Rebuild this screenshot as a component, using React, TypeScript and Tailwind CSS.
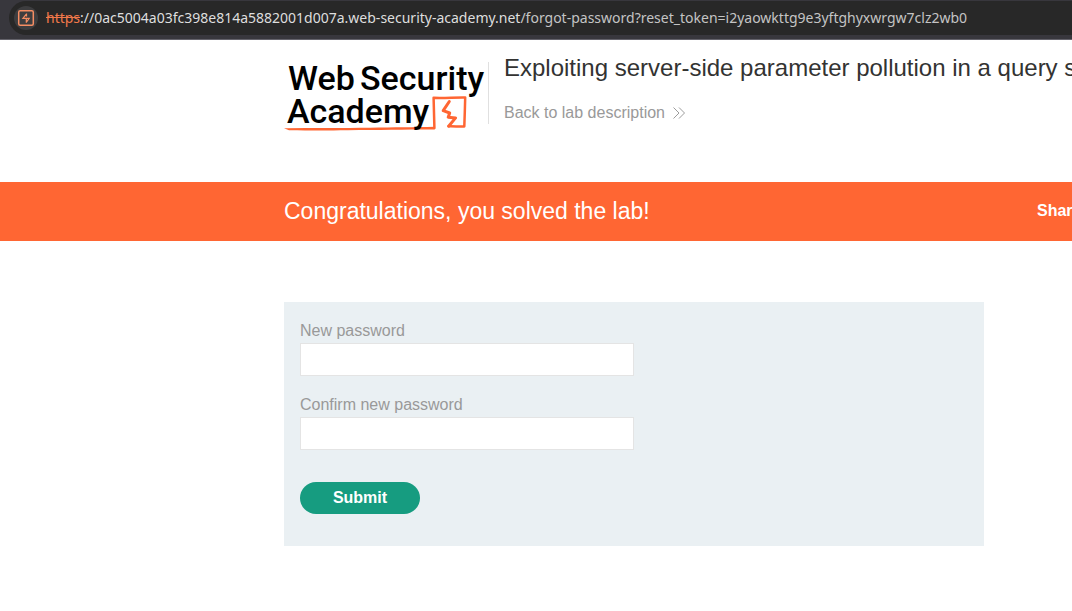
import React from "react";

function SiteIcon() {
  return (
    <svg viewBox="0 0 24 24" className="size-6 shrink-0" aria-hidden="true">
      <circle cx="12" cy="12" r="12" fill="#3d3d3f" />
      <rect x="4.7" y="4.7" width="14.600" height="14.600" rx="1.500" fill="none" stroke="#f58d63" strokeWidth="1.500" />
      <path d="M12.500 7.500V10.500M12.500 7.800 8.900 12.400H12.300V16.800M12.300 12.400H15.200L12.600 16" fill="none" stroke="#f58d63" strokeWidth="1.200" />
    </svg>
  );
}

function AddressBar() {
  return (
    <header className="flex h-10 items-start overflow-hidden border-b border-[#64636b] bg-[#38373d] pt-px pl-[9px]">
      <div className="flex h-[34px] flex-1 items-center gap-2 rounded-l-full bg-[#282828] pl-[5px] font-['Noto_Sans',sans-serif] text-sm whitespace-nowrap text-[#c4c4c4]">
        <SiteIcon />
        <p>
          <span className="text-[#f0784a] line-through">https</span>
          <span className="text-[#dedede]">://0ac5004a03fc398e814a5882001d007a.web-security-academy.net</span>
          <span>/forgot-password?reset_token=i2yaowkttg9e3yftghyxwrgw7clz2wb0</span>
        </p>
      </div>
    </header>
  );
}

function Logo() {
  return (
    <svg viewBox="0 0 204 76" className="h-[76px] w-[204px] shrink-0" role="img" aria-label="Web Security Academy">
      <path d="M0 71.200C30 70.800 60 71.200 86 70.800 110 70.200 130 70.500 151 69.800L150.500 72.500C120 72.500 94 73 64 73.200 40 73.600 24 73.400 5 73.200Z" fill="#ff6633" />
      <path d="M150.400 71 149.600 40.800C160 41.300 171 40.300 181.200 40.500L180.800 55 180.300 69.500C175 69.900 170 69 164.600 69.300" fill="none" stroke="#ff6633" strokeWidth="2.500" strokeLinejoin="round" strokeLinecap="round" />
      <path d="M165.300 44.500 159.200 53.700 165.700 56 164.200 60.200 171.600 60.900 164.600 69.200" fill="none" stroke="#ff6633" strokeWidth="3" strokeLinejoin="round" strokeLinecap="round" />
      <g className="font-[Roboto,sans-serif] text-[34px] font-medium" fill="#000">
        <text x="4" y="33">Web</text>
        <text x="76" y="33">Security</text>
        <text x="3" y="66">Academy</text>
      </g>
    </svg>
  );
}

function Chevrons() {
  return (
    <svg viewBox="0 0 12 12" className="size-3" fill="none" stroke="#9c9c9c" strokeWidth="1" aria-hidden="true">
      <path d="M.5.500 6 6 .5 11.500M6 .500 11.500 6 6 11.500" />
    </svg>
  );
}

function PasswordField({ id, label }: { id: string; label: string }) {
  return (
    <div className="flex flex-col items-start">
      <label htmlFor={id} className="leading-6">{label}</label>
      <input id={id} type="password" className="h-[33px] w-full max-w-[334px] border border-[#e4e4e4] bg-white px-2" />
    </div>
  );
}

export default function App() {
  return (
    <div className="min-h-screen overflow-hidden bg-white font-['Liberation_Sans',Arial,sans-serif] text-base text-[#999999]">
      <AddressBar />
      <section className="flex h-[142px] items-start pt-[17px] pl-[284px] whitespace-nowrap">
        <Logo />
        <div className="mt-[5px] h-[62px] border-l border-[#e0e0e0] pl-[15px]">
          <h1 className="-mt-[10px] text-2xl text-[#333332]">Exploiting server-side parameter pollution in a query string</h1>
          <a href="#lab" className="mt-[17px] flex items-center gap-2">
            Back to lab description
            <Chevrons />
          </a>
        </div>
      </section>
      <section className="flex h-[59px] items-center bg-[#ff6633] pb-px pl-[284px] whitespace-nowrap text-white">
        <h2 className="w-[753px] shrink-0 text-[23px]">Congratulations, you solved the lab!</h2>
        <span className="font-bold">Share your skills!</span>
      </section>
      <main className="mt-[61px] pl-[284px]">
        <form className="flex w-full max-w-[700px] flex-col gap-[17px] bg-[#eaf0f3] px-4 pt-[17px] pb-8" onSubmit={(event) => event.preventDefault()}>
          <PasswordField id="new-password" label="New password" />
          <PasswordField id="confirm-password" label="Confirm new password" />
          <button type="submit" className="mt-[15px] h-8 w-[120px] rounded-full bg-[#169c80] font-bold text-white">Submit</button>
        </form>
      </main>
    </div>
  );
}
